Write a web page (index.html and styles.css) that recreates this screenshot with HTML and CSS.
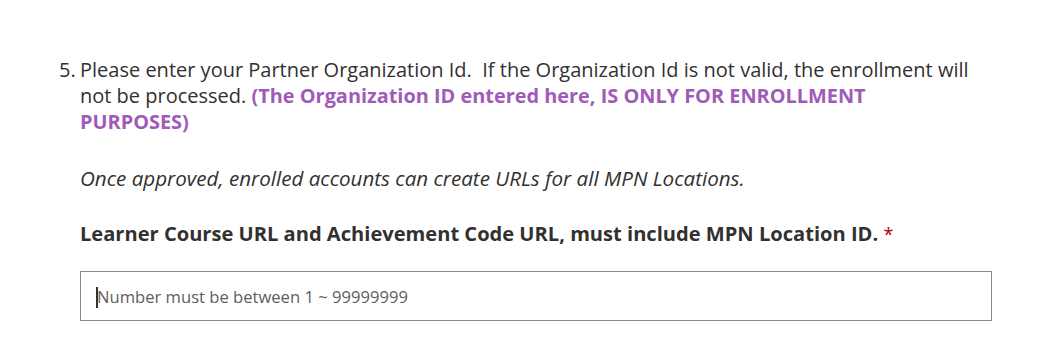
FILE: index.html
```html
<!DOCTYPE html>
<html lang="en">
<head>
  <meta charset="UTF-8" />
  <title>Enrollment question</title>
  <link rel="stylesheet" href="styles.css">
</head>
<body>
  <main class="question">
    <span class="q-num">5.</span>
    <div class="q-body">
      <p class="q-title">Please enter your Partner Organization Id.&nbsp; If the Organization Id is not valid, the enrollment will not be processed. <strong class="note">(The Organization ID entered here, IS ONLY FOR ENROLLMENT PURPOSES)</strong></p>
      <p class="q-hint">Once approved, enrolled accounts can create URLs for all MPN Locations.</p>
      <p class="q-label">Learner Course URL and Achievement Code URL, must include MPN Location ID. <span class="req">*</span></p>
      <div class="field">
        <span class="caret"></span>
        <input type="text" placeholder="Number must be between 1 ~ 99999999">
      </div>
    </div>
  </main>
</body>
</html>
```

FILE: styles.css
```css
* { margin: 0; padding: 0; box-sizing: border-box; }
body {
  background: #fff;
  color: #323130;
  font-family: 'Open Sans', 'Noto Sans', sans-serif;
}
.question {
  display: flex;
  padding: 57px 0 0 59px;
  width: 992px;
}
.q-num {
  width: 21px;
  font-size: 20px;
  line-height: 26px;
}
.q-body {
  flex: 1;
}
.q-title {
  max-width: 892px;
  font-size: 20px;
  line-height: 26px;
}
.note {
  color: #a05bb8;
  font-weight: 700;
  font-size: 19.9px;
}
.q-hint {
  margin-top: 30px;
  font-size: 20.6px;
  line-height: 26px;
  font-style: italic;
}
.q-label {
  margin-top: 30px;
  font-size: 20.1px;
  line-height: 26px;
  font-weight: 700;
}
.req {
  color: #a80000;
  font-weight: 400;
  font-size: 18px;
}
.field {
  position: relative;
  margin-top: 24px;
  height: 50px;
  border: 1px solid #8a8886;
  display: flex;
  align-items: center;
  padding-left: 16px;
}
.field input {
  border: none;
  outline: none;
  width: 100%;
  font-family: inherit;
  font-size: 16.6px;
  color: #323130;
}
.field input::placeholder { color: #605e5c; }
.caret {
  position: absolute;
  left: 15px;
  top: 15px;
  width: 2px;
  height: 21px;
  background: #323130;
}
```
